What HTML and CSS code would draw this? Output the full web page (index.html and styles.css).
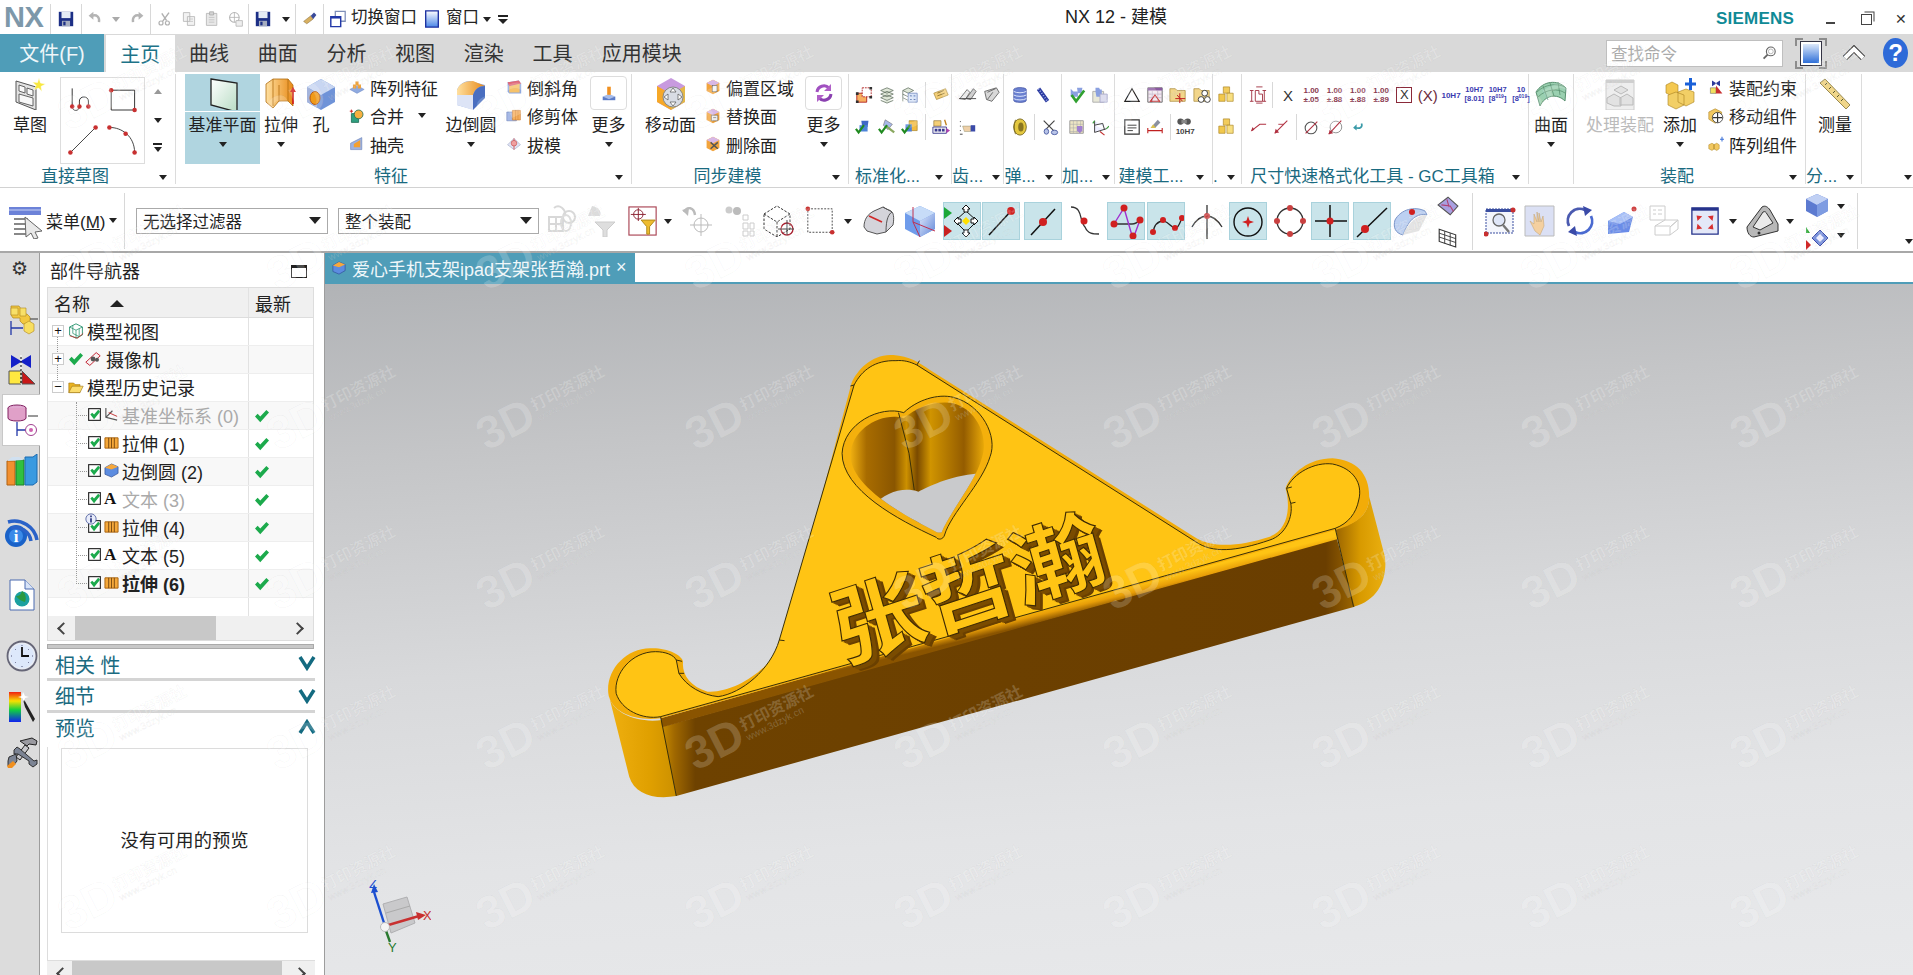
FILE: index.html
```html
<!DOCTYPE html>
<html lang="zh">
<head>
<meta charset="utf-8">
<title>NX 12 - 建模</title>
<link rel="stylesheet" href="styles.css">
</head>
<body>
<svg class="sprite" xmlns="http://www.w3.org/2000/svg">
<defs>
<linearGradient id="gBlue" x1="0" y1="0" x2="1" y2="1"><stop offset="0" stop-color="#dfe8fb"/><stop offset="1" stop-color="#5f86d8"/></linearGradient>
<linearGradient id="gOrange" x1="0" y1="0" x2="1" y2="0"><stop offset="0" stop-color="#ffe0a0"/><stop offset="1" stop-color="#e88a18"/></linearGradient>
<linearGradient id="gYellow" x1="0" y1="0" x2="1" y2="1"><stop offset="0" stop-color="#fff2a8"/><stop offset="1" stop-color="#d8a628"/></linearGradient>
<linearGradient id="gPlane" x1="0" y1="0" x2="1" y2="1"><stop offset="0" stop-color="#ffffff"/><stop offset="1" stop-color="#b8dcc4"/></linearGradient>
<linearGradient id="gRain" x1="0" y1="0" x2="0" y2="1"><stop offset="0" stop-color="#f02010"/><stop offset=".3" stop-color="#f8e000"/><stop offset=".6" stop-color="#10d040"/><stop offset="1" stop-color="#1020f0"/></linearGradient>
<symbol id="save" viewBox="0 0 20 20"><path d="M2 2h16v16H2z" fill="#1c2f86"/><rect x="5" y="2" width="10" height="7" fill="#e4ebf5"/><rect x="5.500" y="12" width="9" height="6" fill="#a5adc0"/><rect x="7" y="13" width="2.500" height="4" fill="#1c2f86"/></symbol>
<symbol id="undo" viewBox="0 0 20 20"><path d="M6 6c6-2 10 1 9 8" fill="none" stroke="#b4b4b4" stroke-width="3"/><path d="M8 1v10L2 6z" fill="#b4b4b4"/></symbol>
<symbol id="redo" viewBox="0 0 20 20"><path d="M14 6c-6-2-10 1-9 8" fill="none" stroke="#b4b4b4" stroke-width="3"/><path d="M12 1v10l6-5z" fill="#b4b4b4"/></symbol>
<symbol id="cut" viewBox="0 0 20 20"><path d="M15 2 7 13M12 12 6 3" stroke="#b0b0b0" stroke-width="1.800" fill="none"/><circle cx="5" cy="15" r="2.500" fill="none" stroke="#b0b0b0" stroke-width="1.500"/><circle cx="13" cy="15" r="2.500" fill="none" stroke="#b0b0b0" stroke-width="1.500"/></symbol>
<symbol id="copy" viewBox="0 0 20 20"><path d="M3 2h8v11H3zM8 7h9v11H8z" fill="#f2f2f2" stroke="#b4b4b4"/><path d="M10 10h5M10 13h5" stroke="#c4c4c4"/></symbol>
<symbol id="paste" viewBox="0 0 20 20"><path d="M3 3h13v15H3z" fill="#e8e8e8" stroke="#b4b4b4"/><path d="M7 1h5v4H7z" fill="#d4d4d4" stroke="#aaa"/><path d="M6 8h7M6 11h7M6 14h7" stroke="#c0c0c0"/></symbol>
<symbol id="glass" viewBox="0 0 20 20"><circle cx="8" cy="8" r="6" fill="none" stroke="#b4b4b4" stroke-width="1.300"/><path d="M2 8h12M8 2v12" stroke="#b4b4b4"/><path d="M10 12h8v7h-8z" fill="#eee" stroke="#b4b4b4"/></symbol>
<symbol id="brush" viewBox="0 0 20 20"><path d="M2 13 11 6l3 4-8 6z" fill="#d8b060" stroke="#7a6030" stroke-width=".6"/><path d="M11 6l4-4 3 3-4 5z" fill="#3a4a9a"/></symbol>
<symbol id="swin" viewBox="0 0 20 20"><path d="M7 1.500h11v11H7z" fill="#fff" stroke="#7f8fb8" stroke-width="1.400"/><path d="M2 7.500h11v11H2z" fill="#fff" stroke="#2238a8" stroke-width="1.600"/><path d="M2 7.500h11v2H2z" fill="#2238a8"/></symbol>
<symbol id="win" viewBox="0 0 20 20"><defs><linearGradient id="gW" x1="0" y1="0" x2="0" y2="1"><stop offset="0" stop-color="#fff"/><stop offset="1" stop-color="#4a86e8"/></linearGradient></defs><path d="M3 1h14v18H3z" fill="url(#gW)" stroke="#1a2fa0" stroke-width="1.500"/></symbol>
<symbol id="mag" viewBox="0 0 20 20"><circle cx="11" cy="8" r="5.500" fill="#fff" stroke="#666" stroke-width="1.400"/><circle cx="11" cy="8" r="3" fill="none" stroke="#aaa"/><path d="M7 12l-5 5" stroke="#666" stroke-width="2.400"/></symbol>
<symbol id="sketch" viewBox="0 0 32 32"><path d="M2 3 22 9v23L2 24z" fill="#e2e2e2" stroke="#555"/><path d="M5 7l6 2v6l-6-2zM13 10l6 2v6l-6-2zM5 16l14 4v8L5 24z" fill="#f8f8f8" stroke="#555" stroke-width=".9"/><path d="M25 0l1.500 5 5 1-4.500 2.500 1 5-3.500-3.500-4.500 2 2-4.500-3.500-3.500 5 .5z" fill="#f8e840" stroke="#fff" stroke-width=".5"/></symbol>
<symbol id="plane" viewBox="0 0 32 32"><path d="M4 1 30 5v29L4 27z" fill="url(#gPlane)" stroke="#222" stroke-width="1.300"/></symbol>
<symbol id="extrude" viewBox="0 0 32 32"><path d="M1 6 8 1h15l5 6v21l-5-5H14l-6 7-7-6z" fill="url(#gOrange)" stroke="#b06c10" stroke-width=".8"/><path d="M8 1v27M14 7v16M23 1v22" stroke="#b06c10" fill="none" stroke-width=".8"/><path d="M28 26V13" stroke="#d01818" stroke-width="1.600"/><path d="M25 14l3-5 3 5z" fill="#d01818"/></symbol>
<symbol id="hole" viewBox="0 0 32 32"><path d="M2 9 16 1l14 8v15l-14 8-14-8z" fill="#6f93d8"/><path d="M2 9 16 1l14 8-14 8z" fill="#c8d6f2"/><path d="M2 9l10 6v15L2 24z" fill="#a4b4dc"/><ellipse cx="10" cy="20" rx="5" ry="6.500" fill="#f09a18" stroke="#b85a10"/></symbol>
<symbol id="blend" viewBox="0 0 32 32"><path d="M2 12C4 6 10 3 15 3l15 4v10l-14 14-14-4z" fill="#8ea8e0"/><path d="M2 12C4 6 10 3 18 3l12 5c-6 0-10 3-12 9L2 17z" fill="url(#gOrange)"/><path d="M30 8v12L18 32V17c2-6 6-9 12-9z" fill="#4a6ec0"/><path d="M2 17h16v15L2 27z" fill="#dde4f6"/></symbol>
<symbol id="move" viewBox="0 0 32 32"><path d="M16 0 30 8v16l-14 8-14-8V8z" fill="#c89adf"/><path d="M2 8l14 8v16L2 24z" fill="#f6a828"/><path d="M16 16v16l14-8V8z" fill="#e4b848"/><circle cx="18" cy="19" r="10" fill="#d8dce4" stroke="#888"/><path d="M18 10l3 4h-6zM18 28l3-4h-6zM9 19l4-3v6zM27 19l-4-3v6z" fill="#fff" stroke="#555" stroke-width=".7"/></symbol>
<symbol id="morebox" viewBox="0 0 20 20"><path d="M3 14h14v4H3z" fill="#5c7cc8"/><path d="M3 14l7-3 7 3-7 3z" fill="#a8bce8"/><path d="M8 3h4v9H8z" fill="#f09020"/></symbol>
<symbol id="cycle" viewBox="0 0 20 20"><path d="M3 9a7 7 0 0 1 12-4" fill="none" stroke="#a050c0" stroke-width="3"/><path d="M17 11a7 7 0 0 1-12 4" fill="none" stroke="#8a40b0" stroke-width="3"/><path d="M17 1v7h-7zM3 19v-7h7z" fill="#b060c8"/></symbol>
<symbol id="pattern" viewBox="0 0 20 20"><path d="M1 13l9-5 9 5-9 5z" fill="#8faae0" stroke="#6a84c0" stroke-width=".5"/><path d="M5 7h4v5H5zM11 7h4v5h-4zM8 3h4v5H8z" fill="#f2a238"/></symbol>
<symbol id="unite" viewBox="0 0 20 20"><path d="M3 7h9v11H3z" fill="#30a080" stroke="#1c6a50"/><circle cx="12" cy="8" r="5.500" fill="#f7b040" stroke="#1c6a50"/><path d="M1 4h4M3 2v4" stroke="#d02020" stroke-width="1.200"/></symbol>
<symbol id="shell" viewBox="0 0 20 20"><path d="M2 9 16 2v15L2 17z" fill="#9db2e2" stroke="#6078b0" stroke-width=".7"/><path d="M6 10l8-5v9H6z" fill="#f4a030"/></symbol>
<symbol id="chamfer" viewBox="0 0 20 20"><path d="M2 4l14-2 3 4v12H4L2 16z" fill="#8ea8e0"/><path d="M2 4l14-2 3 4L4 9z" fill="#e06878"/><path d="M4 9l13-3v11H4z" fill="#f6c26a"/></symbol>
<symbol id="trim" viewBox="0 0 20 20"><path d="M1 5h12v11H1z" fill="#a7b9e6" stroke="#6a80b8" stroke-width=".7"/><path d="M8 3h10v12H8z" fill="#f7b060" stroke="#c87a30" stroke-width=".7"/><path d="M12 3v12M15 3v12" stroke="#c87a30" stroke-width=".6"/></symbol>
<symbol id="draft" viewBox="0 0 20 20"><path d="M2 11 10 3l8 8-8 6z" fill="#e0e4f4" stroke="#a0a8c8" stroke-width=".8"/><path d="M10 3v14" stroke="#d04040"/><circle cx="10" cy="9" r="3.500" fill="#f0a0a0" stroke="#c04040" stroke-width=".7"/></symbol>
<symbol id="offset" viewBox="0 0 20 20"><path d="M10 1 18 5v10l-8 4-8-4V5z" fill="#f2a43c"/><path d="M2 5l8 4 8-4-8-4z" fill="#d8b8e6"/><rect x="9" y="8" width="6" height="8" fill="#f4f4f4" stroke="#555" stroke-width=".7"/></symbol>
<symbol id="replace" viewBox="0 0 20 20"><path d="M10 1 18 5v10l-8 4-8-4V5z" fill="#f2a43c"/><path d="M2 5l8 4 8-4-8-4z" fill="#d8b8e6"/><path d="M8 9h8v7H8z" fill="#eee" stroke="#555" stroke-width=".7"/><path d="M10 12h4" stroke="#888"/></symbol>
<symbol id="delface" viewBox="0 0 20 20"><path d="M10 1 18 5v10l-8 4-8-4V5z" fill="#f2a43c"/><path d="M2 5l8 4 8-4-8-4z" fill="#d8b8e6"/><path d="M7 8l9 8M16 8l-9 8" stroke="#555" stroke-width="1.800"/></symbol>
<symbol id="m1" viewBox="0 0 20 20"><path d="M2 8h11v10H2z" fill="#f7b060" stroke="#b02020"/><path d="M8 2h10v10H8z" fill="#fff" stroke="#b02020" stroke-dasharray="2 1"/><path d="M1 7h3v3H1zM16 1h3v3h-3zM16 11h3v3h-3zM1 16h3v3H1z" fill="#303030"/></symbol>
<symbol id="m2" viewBox="0 0 20 20"><path d="M3 5l7-3 7 3-7 3zM3 9l7-3 7 3-7 3zM3 13l7-3 7 3-7 3zM3 16l7 3 7-3" fill="#dfe7d8" stroke="#5a6a5a" stroke-width=".8"/></symbol>
<symbol id="m3" viewBox="0 0 20 20"><path d="M2 5l6-3 6 3-6 3zM2 9l6 3M2 13l6 3M2 5v12" fill="#dfe7d8" stroke="#5a6a5a" stroke-width=".8"/><path d="M8 8h10v10H8z" fill="#d8e4f8" stroke="#6a80b8" stroke-width=".8"/><path d="M10 11h2M14 11h2M10 15h2M14 15h2" stroke="#5070b0"/></symbol>
<symbol id="m4" viewBox="0 0 20 20"><path d="M2 8 15 3l3 7-13 5z" fill="#f4cf78" stroke="#a88838" stroke-width=".8"/><path d="M6 8l7-3M6 11l8-3" stroke="#8a7030"/></symbol>
<symbol id="m5" viewBox="0 0 20 20"><path d="M7 3h8l-1 7H8z" fill="#4068c8"/><path d="M5 8h9v7H5z" fill="#4c84d8"/><path d="M1 12l3 4 6-8" fill="none" stroke="#208a20" stroke-width="2.400"/></symbol>
<symbol id="m6" viewBox="0 0 20 20"><path d="M8 2l8 5-5 6-5-5z" fill="#a8b8e8" stroke="#666" stroke-width=".6"/><path d="M9 9l9 7" stroke="#8aa860" stroke-width="2.500"/><path d="M1 12l3 4 6-8" fill="none" stroke="#208a20" stroke-width="2.400"/></symbol>
<symbol id="m7" viewBox="0 0 20 20"><path d="M9 3h9v11H9z" fill="#f2bb40" stroke="#a07a20" stroke-width=".7"/><path d="M5 7h7v8H5z" fill="#5080d8"/><path d="M1 12l3 4 6-8" fill="none" stroke="#208a20" stroke-width="2.400"/></symbol>
<symbol id="m8" viewBox="0 0 20 20"><path d="M2 3h8v6H2z" fill="#f4cf78" stroke="#8a7030" stroke-width=".7"/><path d="M1 10h15v7H1z" fill="#f4f4f4" stroke="#3a3a90"/><path d="M3 12h3v3H3zM7 12h3v3H7zM11 12h3v3h-3z" fill="#3a3a90"/><path d="M16 11l4 3-4 3z" fill="#b040b0"/><path d="M14 2l2 6" stroke="#c08020" stroke-width="1.500"/></symbol>
<symbol id="g1" viewBox="0 0 20 20"><path d="M1 14 9 4l3 3-5 8z" fill="#f0f0f0" stroke="#444" stroke-width=".8"/><path d="M8 14 16 3l3 3-6 9z" fill="#d0d0d0" stroke="#444" stroke-width=".8"/><path d="M0 14h19" stroke="#444"/></symbol>
<symbol id="g2" viewBox="0 0 20 20"><path d="M3 6 16 2l3 5-8 10-6-2z" fill="#d8d8d8" stroke="#444" stroke-width=".8"/><path d="M6 7l9-4M6 15l6-8" stroke="#444" stroke-width=".8"/></symbol>
<symbol id="g3" viewBox="0 0 20 20"><path d="M3 4c0-3 14-3 14 0v12c0 3-14 3-14 0z" fill="#6a80d0" stroke="#2a3a90" stroke-width=".6"/><path d="M3 6c3 2 11 2 14 0M3 10c3 2 11 2 14 0M3 14c3 2 11 2 14 0" stroke="#e8eeff" fill="none"/></symbol>
<symbol id="g4" viewBox="0 0 20 20"><path d="M5 3l10 14" stroke="#2a3aa0" stroke-width="4.500"/><path d="M5 3l10 14" stroke="#a0b0e8" stroke-width="2" stroke-dasharray="1 2"/></symbol>
<symbol id="g5" viewBox="0 0 20 20"><ellipse cx="10" cy="10" rx="7" ry="9" fill="#e4c840" stroke="#7a6a20"/><ellipse cx="11" cy="10" rx="3" ry="5" fill="#8a7620"/><path d="M5 2c-2 5-2 11 0 16" stroke="#7a6a20" fill="none"/></symbol>
<symbol id="g6" viewBox="0 0 20 20"><path d="M3 3l13 13M15 3 4 14" stroke="#444" stroke-width="1.300"/><ellipse cx="15" cy="16" rx="3.500" ry="2.500" fill="#b8c4e8" stroke="#4a5aa0"/><ellipse cx="6" cy="15" rx="2.500" ry="3" fill="#b8c4e8" stroke="#4a5aa0"/></symbol>
<symbol id="g7" viewBox="0 0 20 20"><path d="M1 4h1M1 9h1M1 14h1M1 18h3" stroke="#333"/><path d="M4 9h9v6H6z" fill="#eed0a8" stroke="#886" stroke-width=".5"/><path d="M13 8h5v7h-5z" fill="#3a4aa8"/></symbol>
<symbol id="j1" viewBox="0 0 20 20"><path d="M3 3l3 3h5v6H3z" fill="#8aa0e0"/><path d="M10 2h6l-1 6h-4z" fill="#8aa0e0"/><path d="M4 10l5 7 9-12" fill="none" stroke="#30a030" stroke-width="3"/></symbol>
<symbol id="j2" viewBox="0 0 20 20"><path d="M2 6h12v12H2z" fill="#e8e8d8" stroke="#aaa"/><path d="M5 6V2h4l1 2h2v8H6z" fill="#8aa0e0"/><path d="M10 9h8v9h-8z" fill="#dde" stroke="#aac"/></symbol>
<symbol id="j3" viewBox="0 0 20 20"><path d="M2 3h15v14H2z" fill="#eee6c4" stroke="#999"/><path d="M2 7h15M2 11h15M2 15h15M6 3v14M10 3v14M14 3v14" stroke="#aaa" stroke-width=".6"/><path d="M10 9h6v5l-3 3-3-3z" fill="#a080d0"/></symbol>
<symbol id="j4" viewBox="0 0 20 20"><path d="M4 3v13l13-4M4 8l9-2 2 7" fill="#eef" stroke="#333"/><path d="M4 3 2 6M17 12l3-3" stroke="#3a9a3a" stroke-width="1.300"/><path d="M10 15l5 4" stroke="#c03030" stroke-width="1.300"/></symbol>
<symbol id="tri" viewBox="0 0 20 20"><path d="M10 3 18 17H2z" fill="#fff" stroke="#222" stroke-width="1.300"/></symbol>
<symbol id="tbl" viewBox="0 0 20 20"><path d="M2 2h16v16H2z" fill="#f2e8f0" stroke="#666"/><path d="M2 2h16v3H2z" fill="#8a5aa0"/><path d="M2 9h16M2 13h16M7 5v13M13 5v13" stroke="#b8a8c0" stroke-width=".7"/><path d="M10 10l5 7H5z" fill="none" stroke="#c02020" stroke-width="1.200"/></symbol>
<symbol id="ffold" viewBox="0 0 20 20"><path d="M1 3h6l2 2h9v12H1z" fill="#f2d68a" stroke="#a88838" stroke-width=".8"/><path d="M12 8v11M7 14h11M9 10l6 7" stroke="#c02020" stroke-width="1.100"/></symbol>
<symbol id="gfold" viewBox="0 0 20 20"><path d="M1 3h6l2 2h9v12H1z" fill="#f2d68a" stroke="#a88838" stroke-width=".8"/><circle cx="13" cy="8" r="3.200" fill="#fff" stroke="#333"/><circle cx="9" cy="15" r="3.200" fill="#fff" stroke="#333"/><circle cx="16" cy="15" r="3.200" fill="#fff" stroke="#333"/></symbol>
<symbol id="note" viewBox="0 0 20 20"><path d="M2 2h16v16H2z" fill="#fff" stroke="#333" stroke-width="1.300"/><path d="M5 8h10M5 11h10M5 14h6" stroke="#333"/></symbol>
<symbol id="bru2" viewBox="0 0 20 20"><path d="M2 14h16M2 11v6M18 11v6" stroke="#c02020" stroke-width="1.200"/><path d="M7 9l6-7 3 3-6 6z" fill="#8a90a0"/><path d="M5 11l3-4 3 4z" fill="#d8c050"/></symbol>
<symbol id="bino" viewBox="0 0 20 20"><circle cx="5" cy="4" r="3.500" fill="#555"/><circle cx="13" cy="4" r="3.500" fill="#555"/><rect x="6" y="2" width="6" height="4" fill="#888"/></symbol>
<symbol id="gold" viewBox="0 0 20 20"><path d="M7 1h7v7H7z" fill="#f2cc5c" stroke="#a88020" stroke-width=".7"/><path d="M2 9h7v8H2z" fill="#f2c84c" stroke="#a88020" stroke-width=".7"/><path d="M11 8h7v9h-7z" fill="#f8df80" stroke="#a88020" stroke-width=".7"/></symbol>
<symbol id="d1" viewBox="0 0 20 20"><path d="M7 5v12h8V9h-4V5zM3 5v12M17 5v12M1 5h4M1 17h4M15 5h4M15 17h4M8 1h7M8 19h7" fill="none" stroke="#a03040" stroke-width="1"/></symbol>
<symbol id="d2" viewBox="0 0 20 20"><path d="M3 14 12 7h7" fill="none" stroke="#b03040" stroke-width="1.200"/><path d="M2 15l2-5 2 3z" fill="#b03040"/></symbol>
<symbol id="d3" viewBox="0 0 20 20"><path d="M3 17 17 3" stroke="#b03040" stroke-width="1.200"/><path d="M3 17l1-5 4 4z" fill="#b03040"/><path d="M7 7h6" stroke="#b03040"/></symbol>
<symbol id="d4" viewBox="0 0 20 20"><circle cx="10" cy="11" r="6.500" fill="none" stroke="#555" stroke-width="1.200"/><path d="M4 17 17 4" stroke="#b03040" stroke-width="1.200"/></symbol>
<symbol id="d5" viewBox="0 0 20 20"><circle cx="11" cy="10" r="6.500" fill="none" stroke="#888"/><path d="M3 18 17 3" stroke="#b03040" stroke-width="1.200"/><path d="M3 18l1-5 4 4z" fill="#b03040"/></symbol>
<symbol id="d6" viewBox="0 0 20 20"><path d="M15 5c2 5-2 8-9 6" fill="none" stroke="#3a9aa8" stroke-width="2.400"/><path d="M8 6v9l-5-4z" fill="#3a9aa8"/></symbol>
<symbol id="surf" viewBox="0 0 32 32"><path d="M1 14C8 3 22 1 31 10l-1 13C22 15 10 17 5 28z" fill="#9ad0b0" stroke="#5a9070"/><path d="M8 8l5 14M15 5l4 13M23 4l2 13M3 19c8-8 20-9 27-4M2 14c8-8 20-9 28-5" stroke="#5a9070" fill="none" stroke-width=".8"/></symbol>
<symbol id="asmh" viewBox="0 0 32 32"><path d="M2 2h28v30H2z" fill="#eee" stroke="#ccc"/><path d="M2 2h28v3H2z" fill="#cfcfcf"/><path d="M10 12l7-4 7 4-7 4z M3 20l7-4 7 4v8l-7 0-7-3zM16 20l7-4 6 4v7h-13z" fill="#e2e2e2" stroke="#bbb"/></symbol>
<symbol id="add" viewBox="0 0 32 32"><path d="M2 7l6-3 6 3v8l-6 3-6-3z" fill="#f4c850" stroke="#a88020" stroke-width=".6"/><path d="M4 17l8-3 8 3v10l-8 4-8-4zM14 14l8-3 8 3v10l-8 4-8-4z" fill="#f2cf66" stroke="#a88020" stroke-width=".6"/><path d="M21 6h11M26.500 0v12" stroke="#1a60d8" stroke-width="3"/></symbol>
<symbol id="acons" viewBox="0 0 20 20"><path d="M3 11h7v7H3z" fill="#f2e060" stroke="#555" stroke-width=".6"/><path d="M10 18V8l8 10z" fill="#c83030"/><path d="M5 2l5 3 5-3v7l-5-3-5 3z" fill="#2a3a9a"/><path d="M10 1v8" stroke="#fff" stroke-dasharray="1 1"/></symbol>
<symbol id="amove" viewBox="0 0 20 20"><path d="M9 1 17 5v9l-8 5-8-5V5z" fill="#f2c860" stroke="#a88020" stroke-width=".7"/><circle cx="12" cy="12" r="6.500" fill="#fff" stroke="#333"/><path d="M12 6v12M6 12h12" stroke="#333" stroke-width="1.400"/></symbol>
<symbol id="apat" viewBox="0 0 20 20"><path d="M1 11l4-2 3 2v5l-3 2-4-2zM7 11l4-2 3 2v5l-3 2-4-2z" fill="#f2c860" stroke="#a88020" stroke-width=".6"/><path d="M15 4h5M17.500 1v6" stroke="#3a70d8" stroke-width="1.300"/></symbol>
<symbol id="rule" viewBox="0 0 32 32"><path d="M1 5 6 1l25 26-4 4z" fill="#f0d68a" stroke="#9a8a50"/><path d="M6 7l2-2M10 11l2-2M14 15l2-2M18 19l2-2M22 23l2-2" stroke="#5a5a30"/></symbol>
<symbol id="menu" viewBox="0 0 36 36"><path d="M0 4h32v8H0z" fill="#6c82d8"/><path d="M0 7h32" stroke="#c8d2f4"/><path d="M5 16h14M5 21h14M5 26h14M5 31h14" stroke="#888" stroke-width="2"/><path d="M16 14 33 28l-7 1 3 6-4 1-3-6-5 4z" fill="#e8e8e8" stroke="#666"/></symbol>
<symbol id="t1" viewBox="0 0 32 32"><path d="M2 12h14v14H2zM7 3a7 8 0 0 1 11 8" fill="none" stroke="#d8d8d8" stroke-width="2"/><circle cx="22" cy="12" r="6" fill="none" stroke="#d8d8d8" stroke-width="2"/><ellipse cx="19" cy="18" rx="5" ry="8" fill="none" stroke="#ddd" stroke-width="2"/><path d="M2 19h14M9 12v14" stroke="#d8d8d8" stroke-width="2"/></symbol>
<symbol id="t2" viewBox="0 0 32 32"><path d="M8 1c6 1 10 5 8 10H4z" fill="#dcdcdc"/><path d="M11 17h20l-8 8v7h-4v-7z" fill="#dedede" stroke="#ccc"/></symbol>
<symbol id="t3" viewBox="0 0 32 32"><rect x="1" y="1" width="29" height="30" fill="#fff" stroke="#a84050" stroke-width="1.200"/><circle cx="11" cy="9" r="5" fill="none" stroke="#8a2030"/><path d="M3 9h16M11 2v14" stroke="#8a2030"/><path d="M14 15h15l-6 7v8h-3v-8z" fill="#eebc30" stroke="#b08818"/></symbol>
<symbol id="t4" viewBox="0 0 32 32"><path d="M2 7c3-6 10-5 11 3" fill="none" stroke="#bbb" stroke-width="2.400"/><path d="M0 5l7-2-1 8z" fill="#bbb"/><circle cx="19" cy="20" r="7" fill="none" stroke="#bbb"/><path d="M8 20h22M19 9v22" stroke="#bbb"/></symbol>
<symbol id="t5" viewBox="0 0 32 32"><circle cx="6" cy="5" r="3.500" fill="#ccc"/><circle cx="14" cy="6" r="4" fill="#bbb"/><path d="M20 10h5v5h-5zM20 18h5v6h-5zM27 18h4v6h-4zM20 26h5v5h-5zM27 26h4v5h-4z" fill="#fff" stroke="#ccc"/></symbol>
<symbol id="t6" viewBox="0 0 32 32"><path d="M1 9 14 1l13 8v15L14 32 1 24zM1 9l13 8 13-8M14 17v15" fill="none" stroke="#333" stroke-dasharray="2.500 1.500"/><circle cx="24" cy="24" r="6" fill="none" stroke="#a82030" stroke-width="1.300"/><path d="M15 24h16M24 15v15" stroke="#444"/></symbol>
<symbol id="t7" viewBox="0 0 32 32"><path d="M3 3h26v25H3z" fill="none" stroke="#444" stroke-dasharray="2 1.500"/><circle cx="3" cy="3" r="2.500" fill="#c83030"/><circle cx="29" cy="28" r="2.500" fill="#c83030"/></symbol>
<symbol id="t8" viewBox="0 0 32 32"><path d="M1 22C1 14 5 9 11 6l9-4 9 5c2 2 2 8 1 13l-7 7-9 2-10-3z" fill="#d4d4da" stroke="#555"/><path d="M6 11l13 6" stroke="#d02828" stroke-width="1.700"/><path d="M20 2c4 3 8 3 9 5-3 2-6 6-6 20" fill="none" stroke="#555"/></symbol>
<symbol id="t9" viewBox="0 0 32 32"><path d="M1 8 16 1l15 7v16l-15 8-15-8z" fill="#6f9ceb"/><path d="M1 8 16 1l15 7-15 8z" fill="#c7dcf8"/><path d="M16 16v16l15-8V8z" fill="url(#gBlue)"/><path d="M9 2v15l22 9M9 17l7 15" stroke="#c03050" fill="none"/></symbol>
<symbol id="h1" viewBox="0 0 36 36"><path d="M0 4l8 6-8 6z" fill="#1ca838"/><path d="M0 22l8 6-8 6z" fill="#c82020"/><path d="M11 18 22 8l11 10-11 11z" fill="none" stroke="#111" stroke-width="1"/><path d="M22 2l4 4h-2v3h-4V6h-2zM22 34l4-4h-2v-3h-4v3h-2zM10 18l4-4v2h3v4h-3v2zM34 18l-4-4v2h-3v4h3v2z" fill="#fff" stroke="#111"/><path d="M22 14l4 4-4 4-4-4z" fill="#ffe000"/></symbol>
<symbol id="p-end" viewBox="0 0 36 36"><path d="M6 32 28 8" stroke="#111" stroke-width="1.500"/><circle cx="28" cy="8" r="4" fill="#d02020"/></symbol>
<symbol id="p-mid" viewBox="0 0 36 36"><path d="M6 32 30 6" stroke="#111" stroke-width="1.500"/><circle cx="18" cy="19" r="4" fill="#d02020"/></symbol>
<symbol id="p-curve" viewBox="0 0 36 36"><path d="M4 4c12 0 8 14 14 20 3 7 8 7 14 7" fill="none" stroke="#333" stroke-width="1.300"/><circle cx="17" cy="18" r="3.500" fill="#d02020"/></symbol>
<symbol id="p-poly" viewBox="0 0 36 36"><path d="M6 21h18c4 0 6-2 8-4" fill="none" stroke="#333" stroke-width="1.300"/><path d="M6 21 16 5l9 31 7-19" fill="none" stroke="#a030d0" stroke-width="1.400"/><circle cx="6" cy="21" r="3.500" fill="#d02020"/><circle cx="16" cy="5" r="3.500" fill="#d02020"/><circle cx="25" cy="33" r="3.500" fill="#d02020"/><circle cx="32" cy="17" r="3.500" fill="#d02020"/></symbol>
<symbol id="p-spl" viewBox="0 0 36 36"><path d="M5 30c1-9 5-12 11-12 6 2 8 8 12 7 3-1 4-6 6-10" fill="none" stroke="#222" stroke-width="1.300"/><circle cx="5" cy="29" r="3" fill="#d02020"/><circle cx="15" cy="17" r="3" fill="#d02020"/><circle cx="27" cy="25" r="3" fill="#d02020"/><circle cx="34" cy="15" r="3" fill="#d02020"/></symbol>
<symbol id="p-cross" viewBox="0 0 36 36"><path d="M18 2v34" stroke="#333" stroke-width="1.300"/><path d="M3 24c5-9 10-11 15-11s10 3 15 11" fill="none" stroke="#333" stroke-width="1.300"/><circle cx="18" cy="13" r="3" fill="#c84040"/></symbol>
<symbol id="p-cen" viewBox="0 0 36 36"><circle cx="18" cy="19" r="14" fill="none" stroke="#111" stroke-width="1.400"/><path d="M18 13l1.500 4.500 4.500 1.500-4.500 1.500L18 25l-1.500-4.500L12 19l4.500-1.500z" fill="#d02020"/></symbol>
<symbol id="p-quad" viewBox="0 0 36 36"><circle cx="18" cy="18" r="13" fill="none" stroke="#333" stroke-width="1.300"/><circle cx="18" cy="5" r="3" fill="#c84040"/><circle cx="18" cy="31" r="3" fill="#c84040"/><circle cx="5" cy="18" r="3" fill="#c84040"/><circle cx="31" cy="18" r="3" fill="#c84040"/></symbol>
<symbol id="p-x" viewBox="0 0 36 36"><path d="M18 2v32M3 18h32" stroke="#111" stroke-width="1.500"/><circle cx="18" cy="18" r="3.500" fill="#d02020"/></symbol>
<symbol id="p-near" viewBox="0 0 36 36"><path d="M3 34 33 5" stroke="#111" stroke-width="1.500"/><circle cx="11" cy="26" r="4" fill="#d02020"/></symbol>
<symbol id="p-surf" viewBox="0 0 36 36"><path d="M2 17C8 6 22 3 32 8l2 4c-9-2-18 3-24 20C2 30 0 24 2 17z" fill="#bcd0f2" stroke="#7a94c8"/><path d="M10 32c5-12 14-20 24-20l-8 16z" fill="#e4e4e4"/><circle cx="19" cy="9" r="3" fill="#d02020"/></symbol>
<symbol id="p-wire" viewBox="0 0 20 20"><path d="M1 9 10 2l9 8-7 8z" fill="#a8a0e0" stroke="#555"/><path d="M4 9l8 1 3 5M9 4l2 7" stroke="#b04070" fill="none"/></symbol>
<symbol id="p-grid" viewBox="0 0 20 20"><path d="M2 3l15 5v11L2 14z" fill="#fff" stroke="#333"/><path d="M7 4.800v11M12 6.500v11M2 6.500l15 5M2 10l15 5" stroke="#333" stroke-width=".8"/></symbol>
<symbol id="v1" viewBox="0 0 32 32"><path d="M2 4h27v24H2z" fill="#f4f6fc" stroke="#3a4ea0" stroke-dasharray="2 1"/><path d="M2 4h27v3H2z" fill="#3a4ea0"/><circle cx="15" cy="15" r="6" fill="#dfe6f8" stroke="#666" stroke-width="1.300"/><path d="M19 20l6 7" stroke="#777" stroke-width="2.400"/><circle cx="29" cy="5" r="2.500" fill="#c83030"/><circle cx="2" cy="29" r="2.500" fill="#c83030"/></symbol>
<symbol id="v2" viewBox="0 0 32 32"><path d="M1 1h29v30H1z" fill="#dbe0f4" stroke="#bbb"/><path d="M11 26 6 16l4 3V9l3 8V7l2 10V8l2 9 2-6 1 10-4 9z" fill="#f4d0a0" stroke="#c8a878" stroke-width=".6"/></symbol>
<symbol id="v3" viewBox="0 0 32 32"><path d="M5 21A12 12 0 0 1 21 5" fill="none" stroke="#4a5ab0" stroke-width="2.800"/><path d="M27 11a12 12 0 0 1-16 16" fill="none" stroke="#4a6ad0" stroke-width="2.800"/><path d="M19 1l9 4-7 6zM13 31l-9-4 7-6z" fill="#3a4aa8"/></symbol>
<symbol id="v4" viewBox="0 0 32 32"><path d="M2 16 18 7l9 5-4 15-21 2z" fill="#6a8ce8"/><path d="M2 16 18 7l9 5-13 7z" fill="#a8c0f8"/><circle cx="28" cy="4" r="2.500" fill="#d04040"/></symbol>
<symbol id="v5" viewBox="0 0 32 32"><path d="M3 1h15v14H3z" fill="#fff" stroke="#ccc"/><path d="M6 5h3M6 9h3M11 5h4M11 9h4" stroke="#ccc"/><path d="M8 21l10-6h13l-8 7v8H8zM8 21h15M23 22l8-7v9l-8 6" fill="#fff" stroke="#ccc"/></symbol>
<symbol id="v6" viewBox="0 0 32 32"><path d="M2 2h28v28H2z" fill="#e4e8f8" stroke="#26338c" stroke-width="1.400"/><path d="M2 2h28v3H2z" fill="#26338c"/><path d="M7 10l6 1-5 5zM25 10l-6 1 5 5zM7 25l6-1-5-5zM25 25l-6-1 5-5z" fill="#d83030"/></symbol>
<symbol id="v7" viewBox="0 0 36 36"><path d="M2 24 17 4c3-2 6 0 8 3l8 14v7L9 34C5 34 2 30 2 24z" fill="#b8b8b8" stroke="#333"/><path d="M8 24 18 9c2-1 3 0 4 2l6 9-13 7z" fill="#eaeaea" stroke="#333"/><circle cx="14" cy="30" r="1.500" fill="#333"/></symbol>
<symbol id="v8" viewBox="0 0 24 24"><path d="M1 6 12 1l11 5v12l-11 6-11-6z" fill="#5c7ad0"/><path d="M1 6 12 1l11 5-11 6z" fill="#c0d0f4"/><path d="M12 12v12l11-6V6z" fill="#7e9ce2"/></symbol>
<symbol id="v9" viewBox="0 0 24 24"><path d="M1 1l4 6H1z" fill="#28a838"/><path d="M1 14l5 5-5 5z" fill="#d02828"/><path d="M7 12l8-8 8 8-8 8z" fill="#7a92dc" stroke="#3a4aa8"/><path d="M11 12l4-4 4 4-4 4z" fill="#eef"/></symbol>
<symbol id="n1" viewBox="0 0 32 32"><path d="M5 2h8l2 3v5h6l3 3v7h-7l-3-3v-3H7l-2-3z" fill="#f2c840" stroke="#b08820" stroke-width=".7"/><path d="M14 4h6v8h-6zM5 4h7v7H5z" fill="#f8e068" stroke="#b08820" stroke-width=".6"/><path d="M5 17v14M5 24h12" stroke="#2238a8" stroke-width="1.300"/><path d="M24 15h9" stroke="#333"/><path d="M18 20l5-3 5 3v7l-5 3-5-3z" fill="#f8de60" stroke="#b08820" stroke-width=".6"/></symbol>
<symbol id="n2" viewBox="0 0 32 32"><path d="M5 1l10 6 10-6v13l-10-6-10 6z" fill="#1420c8"/><path d="M3 17h12v13H3z" fill="#ffe840" stroke="#555"/><path d="M16 17v13h13z" fill="#c81818" stroke="#555"/><path d="M15 1v29" stroke="#fff" stroke-dasharray="2 2"/><path d="M15 1v29" stroke="#111" stroke-dasharray="2 2" stroke-dashoffset="2"/></symbol>
<symbol id="n3" viewBox="0 0 32 32"><ellipse cx="11" cy="4" rx="9" ry="3" fill="#e0a8d0" stroke="#802060"/><path d="M2 4v10c0 4 18 4 18 0V4" fill="#e0a0c8" stroke="#802060"/><path d="M11 18v14M11 26h8" stroke="#2238a8" stroke-width="1.300"/><path d="M22 12h10" stroke="#333"/><circle cx="25" cy="26" r="5.500" fill="none" stroke="#a04090"/><circle cx="25" cy="26" r="2" fill="#d060b0"/></symbol>
<symbol id="n4" viewBox="0 0 32 32"><path d="M1 7h8v24H1z" fill="#f29030" stroke="#b06010"/><path d="M10 6h8v25h-8z" fill="#30c040" stroke="#1c8028"/><path d="M19 3h8l4-3v28l-4 3h-8z" fill="#3a9ae0" stroke="#1a6ab0"/><path d="M1 7l5-4h7l5 3" fill="#d0e0f0"/></symbol>
<symbol id="n5" viewBox="0 0 36 36"><circle cx="12" cy="24" r="11" fill="#1a62c8"/><circle cx="12" cy="24" r="7" fill="#3a8ae8"/><text x="12" y="30" font-size="17" font-weight="700" fill="#fff" text-anchor="middle" font-family="Liberation Serif">i</text><path d="M4 10A23 23 0 0 1 33 28M7 16A16 16 0 0 1 27 29" fill="none" stroke="#2a62c8" stroke-width="3.500"/></symbol>
<symbol id="n6" viewBox="0 0 32 32"><path d="M4 1h15l9 9v21H4z" fill="#fff" stroke="#4a6ab0"/><path d="M19 1v9h9" fill="#d8e4f8" stroke="#4a6ab0"/><circle cx="16" cy="20" r="7.500" fill="#1ca0a0"/><path d="M10 17c4 0 5-2 6-5 3 2 5 6 3 11-3-1-6-2-9-6z" fill="#2a9a40"/></symbol>
<symbol id="n7" viewBox="0 0 32 32"><circle cx="16" cy="16" r="14.500" fill="#e8ecf4" stroke="#667" stroke-width="1.800"/><circle cx="16" cy="16" r="12" fill="#dde8fb"/><path d="M16 7v9h7" fill="none" stroke="#111" stroke-width="1.800"/><path d="M16 5v1M16 26v1M5 16h1M26 16h1M9 9l.7.7M22.300 22.300l.7.7M23 9l-.7.7M9 23l.7-.7" stroke="#557"/></symbol>
<symbol id="n8" viewBox="0 0 32 32"><rect x="3" y="1" width="12" height="30" fill="url(#gRain)"/><path d="M16 5l4 7 9 16-2 3-8-15z" fill="#222"/><path d="M17 1l2 4 4 1-4 1-1 4-2-4-4-1 4-1z" fill="#fff"/></symbol>
<symbol id="n9" viewBox="0 0 32 32"><path d="M14 4l12-3 5 3-1 4-7-1-2 2z" fill="#9a9aa0" stroke="#222"/><path d="M19 8l4 3-9 12-4-3z" fill="#c8c8cc" stroke="#222"/><path d="M8 13l3-3 3 2 14 12 3-1v4l-4 3-4-3v-3L12 17H8z" fill="#7c8494" stroke="#222" stroke-width=".9"/><path d="M3 20l7-3 1 7-4 5-5 0 0-5z" fill="#7c8494" stroke="#222" stroke-width=".9"/><path d="M1 29l6-5 3 3-4 4H2z" fill="#f09020"/></symbol>
<symbol id="cube3d" viewBox="0 0 20 20"><path d="M10 1 18 5v10l-8 4-8-4V5z" fill="none" stroke="#22906a" stroke-width="1.100"/><path d="M2 5l8 4 8-4M10 9v10M6 3v10l8 4V7" fill="none" stroke="#22906a" stroke-width=".9"/><path d="M2 16l10 3 7-6" stroke="#c83030" fill="none"/></symbol>
<symbol id="cam" viewBox="0 0 20 20"><path d="M1 14 14 2l5 4-13 12z" fill="#f8f0f0" stroke="#c02030" stroke-width="1.200"/><circle cx="10" cy="10" r="3" fill="#555"/><circle cx="15" cy="11" r="2.500" fill="#555"/></symbol>
<symbol id="folder" viewBox="0 0 20 20"><path d="M1 5h6l2 2h6v10H1z" fill="#eab320" stroke="#9a7010" stroke-width=".7"/><path d="M1 17 5 9h14l-4 8z" fill="#fbdc6c" stroke="#9a7010" stroke-width=".7"/></symbol>
<symbol id="check" viewBox="0 0 16 16"><path d="M0 8.500 3 5.500 6 8.500 13 1l3 3-10 11z" fill="#1caa4c"/></symbol>
<symbol id="cbox" viewBox="0 0 14 14"><rect x=".7" y=".7" width="12.600" height="12.600" fill="#fff" stroke="#222" stroke-width="1.200"/><path d="M2.500 7l2-2 2 2 4.500-5 2 2-6.500 8z" fill="#1caa4c"/></symbol>
<symbol id="csys" viewBox="0 0 16 16"><path d="M2 1v10l12 3M2 11l7-7" fill="none" stroke="#555" stroke-width="1.200"/><path d="M5 6l9 4" stroke="#c03030"/></symbol>
<symbol id="ext" viewBox="0 0 16 16"><path d="M1 3h14v11H1z" fill="#f5a83a" stroke="#a8620e"/><path d="M5 3v11M8 3v11M11 3v11" stroke="#7a4a10"/></symbol>
<symbol id="edge" viewBox="0 0 16 16"><path d="M1 5 8 1l7 3v7l-7 4-7-3z" fill="#5c8ce0" stroke="#2a4a90" stroke-width=".7"/><path d="M1 5 8 1l7 3-7 3z" fill="#f6a83c"/></symbol>
<symbol id="info" viewBox="0 0 14 14"><circle cx="7" cy="7" r="6" fill="#e8ecfa" stroke="#5060a0"/><path d="M6 6h2v5H6zM6 3h2v2H6z" fill="#303a80"/></symbol>
</defs>
</svg>

<header class="titlebar">
  <span class="nx">NX</span><i class="vsep"></i>
  <span class="c"><svg class="i18"><use href="#save"/></svg></span><i class="vsep"></i>
  <span class="c"><svg class="i16"><use href="#undo"/></svg></span><span class="c"><i class="arr gray"></i></span><span class="c"><svg class="i16"><use href="#redo"/></svg></span><i class="vsep"></i>
  <span class="c"><svg class="i16"><use href="#cut"/></svg></span><span class="c"><svg class="i16"><use href="#copy"/></svg></span><span class="c"><svg class="i16"><use href="#paste"/></svg></span><span class="c"><svg class="i16"><use href="#glass"/></svg></span><i class="vsep"></i>
  <span class="c"><svg class="i18"><use href="#save"/></svg></span><span class="c"><i class="arr"></i></span><i class="vsep"></i>
  <span class="c"><svg class="i16"><use href="#brush"/></svg></span><i class="vsep"></i>
  <span class="c"><svg class="i18"><use href="#swin"/></svg></span><span class="qt">切换窗口</span>
  <span class="c"><svg class="i18"><use href="#win"/></svg></span><span class="qt">窗口</span>
  <span class="c"><i class="arr"></i></span><span class="c"><i class="menu-arr"></i></span>
  <span></span>
  <span class="apptitle">NX 12 - 建模</span>
  <span></span>
  <span class="siemens">SIEMENS</span>
  <span class="winctl"><i class="wmin"></i></span>
  <span class="winctl"><i class="wres"></i></span>
  <span class="winctl wclose">✕</span>
</header>

<nav class="tabs">
  <span class="filetab">文件(F)</span>
  <span class="tab active">主页</span><span class="tab">曲线</span><span class="tab">曲面</span><span class="tab">分析</span><span class="tab">视图</span><span class="tab">渲染</span><span class="tab">工具</span><span class="tab wide">应用模块</span>
  <span class="tabs-right">
    <span class="search"><span>查找命令</span><svg class="i16"><use href="#mag"/></svg></span>
    <span class="fullscr"><i></i></span>
    <svg class="chev-up" viewBox="0 0 24 16"><path d="M3 13 12 4l9 9" fill="none" stroke="#333" stroke-width="6"/><path d="M3 13 12 4l9 9" fill="none" stroke="#fff" stroke-width="4"/></svg>
    <span class="help">?</span>
  </span>
</nav>

<section class="ribbon">
  <div class="group g1">
    <div class="gb">
      <div class="big w60"><svg class="i32"><use href="#sketch"/></svg><span>草图</span></div>
      <div class="gallery">
        <svg viewBox="0 0 40 40" class="gi"><path d="M8 6v20c0 6 8 6 8 0v-6c0-6 10-6 10 0v6" fill="none" stroke="#222"/><circle cx="8" cy="26" r="2.500" fill="#c83030"/><circle cx="16" cy="26" r="2.500" fill="#c83030"/><circle cx="26" cy="26" r="2.500" fill="#c83030"/></svg>
        <svg viewBox="0 0 40 40" class="gi"><path d="M8 8h26v22H8z" fill="none" stroke="#222"/><circle cx="8" cy="8" r="2.500" fill="#c83030"/><circle cx="34" cy="30" r="2.500" fill="#c83030"/></svg>
        <svg viewBox="0 0 40 40" class="gi"><path d="M6 34 34 6" stroke="#333"/><circle cx="6" cy="34" r="2.500" fill="#c83030"/><circle cx="34" cy="6" r="2.500" fill="#c83030"/></svg>
        <svg viewBox="0 0 40 40" class="gi"><path d="M6 6c14 0 28 10 28 28" fill="none" stroke="#333"/><circle cx="6" cy="6" r="2.500" fill="#c83030"/><circle cx="24" cy="13" r="2.500" fill="#c83030"/><circle cx="34" cy="34" r="2.500" fill="#c83030"/></svg>
      </div>
      <div class="scrollcol"><i class="arr up"></i><i class="arr"></i><i class="arr arrm"></i></div>
    </div>
    <div class="gl"><span>直接草图</span><b class="aw"><i class="arr"></i></b></div>
  </div>

  <div class="group g2">
    <div class="gb">
      <div class="big selected"><svg class="i32"><use href="#plane"/></svg><span>基准平面</span><i class="arr"></i></div>
      <div class="big w42"><svg class="i32"><use href="#extrude"/></svg><span>拉伸</span><i class="arr"></i></div>
      <div class="big w38"><svg class="i32"><use href="#hole"/></svg><span>孔</span></div>
      <div class="rows w90"><div class="ri"><svg class="i16"><use href="#pattern"/></svg>阵列特征</div><div class="ri"><svg class="i16"><use href="#unite"/></svg>合并<i class="arr ml"></i></div><div class="ri"><svg class="i16"><use href="#shell"/></svg>抽壳</div></div>
      <div class="big w64"><svg class="i32"><use href="#blend"/></svg><span>边倒圆</span><i class="arr"></i></div>
      <div class="rows w83"><div class="ri"><svg class="i16"><use href="#chamfer"/></svg>倒斜角</div><div class="ri"><svg class="i16"><use href="#trim"/></svg>修剪体</div><div class="ri"><svg class="i16"><use href="#draft"/></svg>拔模</div></div>
      <div class="more"><span class="morebox"><svg class="i18"><use href="#morebox"/></svg></span><span>更多</span><i class="arr"></i></div>
    </div>
    <div class="gl"><span>特征</span><b class="aw"><i class="arr"></i></b></div>
  </div>

  <div class="group g3">
    <div class="gb">
      <div class="big w52"><svg class="i32"><use href="#move"/></svg><span>移动面</span></div>
      <div class="rows w100"><div class="ri"><svg class="i16"><use href="#offset"/></svg>偏置区域</div><div class="ri"><svg class="i16"><use href="#replace"/></svg>替换面</div><div class="ri"><svg class="i16"><use href="#delface"/></svg>删除面</div></div>
      <div class="more"><span class="morebox"><svg class="i20"><use href="#cycle"/></svg></span><span>更多</span><i class="arr"></i></div>
    </div>
    <div class="gl"><span>同步建模</span><b class="aw"><i class="arr"></i></b></div>
  </div>

  <div class="group g4">
    <div class="gb minis">
      <div class="mr"><span class="mi"><svg class="i18"><use href="#m1"/></svg></span><span class="mi"><svg class="i18"><use href="#m2"/></svg></span><span class="mi"><svg class="i18"><use href="#m3"/></svg></span><i class="ms"></i><span class="mi"><svg class="i18"><use href="#m4"/></svg></span></div>
      <div class="mr"><span class="mi"><svg class="i18"><use href="#m5"/></svg></span><span class="mi"><svg class="i18"><use href="#m6"/></svg></span><span class="mi"><svg class="i18"><use href="#m7"/></svg></span><i class="ms"></i><span class="mi"><svg class="i18"><use href="#m8"/></svg></span></div>
    </div>
    <div class="gl"><span>标准化...</span><b class="aw"><i class="arr"></i></b></div>
  </div>

  <div class="group g5">
    <div class="gb minis">
      <div class="mr"><span class="mi"><svg class="i18"><use href="#g1"/></svg></span><span class="mi"><svg class="i18"><use href="#g2"/></svg></span></div>
      <div class="mr"><span class="mi"><svg class="i18"><use href="#g7"/></svg></span></div>
    </div>
    <div class="gl"><span>齿...</span><b class="aw"><i class="arr"></i></b></div>
  </div>

  <div class="group g6">
    <div class="gb minis">
      <div class="mr"><span class="mi"><svg class="i18"><use href="#g3"/></svg></span><span class="mi"><svg class="i18"><use href="#g4"/></svg></span></div>
      <div class="mr"><span class="mi"><svg class="i18"><use href="#g5"/></svg></span><i class="ms"></i><span class="mi"><svg class="i18"><use href="#g6"/></svg></span></div>
    </div>
    <div class="gl"><span>弹...</span><b class="aw"><i class="arr"></i></b></div>
  </div>

  <div class="group g7">
    <div class="gb minis">
      <div class="mr"><span class="mi"><svg class="i18"><use href="#j1"/></svg></span><span class="mi"><svg class="i18"><use href="#j2"/></svg></span></div>
      <div class="mr"><span class="mi"><svg class="i18"><use href="#j3"/></svg></span><span class="mi"><svg class="i18"><use href="#j4"/></svg></span></div>
    </div>
    <div class="gl"><span>加...</span><b class="aw"><i class="arr"></i></b></div>
  </div>

  <div class="group g8">
    <div class="gb minis">
      <div class="mr"><span class="mi"><svg class="i18"><use href="#tri"/></svg></span><span class="mi"><svg class="i18"><use href="#tbl"/></svg></span><span class="mi"><svg class="i18"><use href="#ffold"/></svg></span><span class="mi"><svg class="i18"><use href="#gfold"/></svg></span></div>
      <div class="mr"><span class="mi"><svg class="i18"><use href="#note"/></svg></span><span class="mi"><svg class="i18"><use href="#bru2"/></svg></span><i class="ms"></i><span class="mi bino"><svg class="i18"><use href="#bino"/></svg><b>10H7</b></span></div>
    </div>
    <div class="gl"><span>建模工...</span><b class="aw"><i class="arr"></i></b></div>
  </div>

  <div class="group g9">
    <div class="gb minis">
      <div class="mr"><span class="mi"><svg class="i18"><use href="#gold"/></svg></span></div>
      <div class="mr"><span class="mi"><svg class="i18"><use href="#gold"/></svg></span></div>
    </div>
    <div class="gl"><span>.</span><b class="aw"><i class="arr"></i></b></div>
  </div>

  <div class="group g10">
    <div class="gb minis">
      <div class="mr"><span class="mi"><svg class="i18"><use href="#d1"/></svg></span><i class="ms"></i><span class="mi tx">X</span><span class="mi tol">1.00<br>±.05</span><span class="mi tol">1.00<br>±.88</span><span class="mi tol">1.00<br>±.88</span><span class="mi tol">1.00<br>±.89</span><span class="mi"><span class="boxx">X</span></span><span class="mi tx2">(X)</span><span class="mi h7">10H7</span><span class="mi fit">10H7<br>[8.01]</span><span class="mi fit">10H7<br>[8<sup>019</sup>]</span><span class="mi fit">10<br>[8<sup>019</sup>]</span></div>
      <div class="mr"><span class="mi"><svg class="i18"><use href="#d2"/></svg></span><span class="mi"><svg class="i18"><use href="#d3"/></svg></span><i class="ms"></i><span class="mi"><svg class="i18"><use href="#d4"/></svg></span><span class="mi"><svg class="i18"><use href="#d5"/></svg></span><span class="mi"><svg class="i14"><use href="#d6"/></svg></span></div>
    </div>
    <div class="gl"><span>尺寸快速格式化工具 - GC工具箱</span><b class="aw"><i class="arr"></i></b></div>
  </div>

  <div class="group g11">
    <div class="gb"><div class="big w45"><svg class="i32"><use href="#surf"/></svg><span>曲面</span><i class="arr"></i></div></div>
    <div class="gl"></div>
  </div>

  <div class="group g12">
    <div class="gb">
      <div class="big w86 dim"><svg class="i32"><use href="#asmh"/></svg><span>处理装配</span></div>
      <div class="big w40"><svg class="i32"><use href="#add"/></svg><span>添加</span><i class="arr"></i></div>
      <div class="rows w90 asm"><div class="ri"><svg class="i16"><use href="#acons"/></svg>装配约束</div><div class="ri"><svg class="i16"><use href="#amove"/></svg>移动组件</div><div class="ri"><svg class="i16"><use href="#apat"/></svg>阵列组件</div></div>
    </div>
    <div class="gl"><span>装配</span><b class="aw"><i class="arr"></i></b></div>
  </div>

  <div class="group g13">
    <div class="gb"><div class="big w56"><svg class="i32"><use href="#rule"/></svg><span>测量</span></div></div>
    <div class="gl"><span>分...</span><b class="aw"><i class="arr"></i></b></div>
  </div>
  <div class="group g14">
    <div class="gb"></div>
    <div class="gl"><i class="arr"></i></div>
  </div>
</section>

<section class="toolbar">
  <div class="menu-btn"><svg class="i36"><use href="#menu"/></svg><span>菜单(<u>M</u>)</span><i class="arr"></i></div>
  <i class="tsep"></i>
  <div class="combo c1"><span>无选择过滤器</span><i class="arr big-arr"></i></div>
  <div class="combo c2"><span>整个装配</span><i class="arr big-arr"></i></div>
  <div class="tgrid">
    <span class="c"><svg class="i32"><use href="#t1"/></svg></span>
    <span class="c"><svg class="i32"><use href="#t2"/></svg></span>
    <span class="c"><svg class="i30"><use href="#t3"/></svg></span>
    <span class="c"><i class="arr"></i></span>
    <span class="c"><svg class="i32"><use href="#t4"/></svg></span>
    <span class="c"><svg class="i32"><use href="#t5"/></svg></span>
    <span class="c"><svg class="i32"><use href="#t6"/></svg></span>
    <span class="c"><svg class="i30"><use href="#t7"/></svg></span>
    <span class="c"><i class="arr"></i></span>
    <span class="c"><svg class="i32"><use href="#t8"/></svg></span>
    <span class="c"><svg class="i32"><use href="#t9"/></svg></span>
    <span class="c"><span class="hl"><svg class="i36"><use href="#h1"/></svg></span></span>
    <span class="c"><span class="hl"><svg class="i36"><use href="#p-end"/></svg></span></span>
    <span class="c"><span class="hl"><svg class="i36"><use href="#p-mid"/></svg></span></span>
    <span class="c"><svg class="i36"><use href="#p-curve"/></svg></span>
    <span class="c"><span class="hl"><svg class="i36"><use href="#p-poly"/></svg></span></span>
    <span class="c"><span class="hl"><svg class="i36"><use href="#p-spl"/></svg></span></span>
    <span class="c"><svg class="i36"><use href="#p-cross"/></svg></span>
    <span class="c"><span class="hl"><svg class="i36"><use href="#p-cen"/></svg></span></span>
    <span class="c"><svg class="i36"><use href="#p-quad"/></svg></span>
    <span class="c"><span class="hl"><svg class="i36"><use href="#p-x"/></svg></span></span>
    <span class="c"><span class="hl"><svg class="i36"><use href="#p-near"/></svg></span></span>
    <span class="c"><svg class="i36"><use href="#p-surf"/></svg></span>
    <span class="c stack"><svg class="i22"><use href="#p-wire"/></svg><svg class="i22"><use href="#p-grid"/></svg></span>
    <i class="tsep2"></i>
    <span class="c"><svg class="i32"><use href="#v1"/></svg></span>
    <span class="c"><svg class="i32"><use href="#v2"/></svg></span>
    <span class="c"><svg class="i32"><use href="#v3"/></svg></span>
    <span class="c"><svg class="i32"><use href="#v4"/></svg></span>
    <span class="c"><svg class="i32"><use href="#v5"/></svg></span>
    <span class="c"><svg class="i30"><use href="#v6"/></svg></span>
    <span class="c"><i class="arr"></i></span>
    <span class="c"><svg class="i36"><use href="#v7"/></svg></span>
    <span class="c"><i class="arr"></i></span>
    <span class="c stack"><svg class="i24"><use href="#v8"/></svg><svg class="i24"><use href="#v9"/></svg></span>
    <span class="c stack tight"><i class="arr"></i><i class="arr"></i></span>
    <span class="c"><i class="tsep3"></i></span>
    <span class="c end"><i class="arr"></i></span>
  </div>
</section>

<main class="main">
  <aside class="rail">
    <span class="gear">⚙</span>
    <span class="ra"><svg class="i32"><use href="#n1"/></svg></span>
    <span class="ra"><svg class="i32"><use href="#n2"/></svg></span>
    <span class="ra on"><svg class="i32"><use href="#n3"/></svg></span>
    <span class="ra"><svg class="i32"><use href="#n4"/></svg></span>
    <span class="ra"><svg class="i36"><use href="#n5"/></svg></span>
    <span class="ra"><svg class="i32"><use href="#n6"/></svg></span>
    <span class="ra"><svg class="i32"><use href="#n7"/></svg></span>
    <span class="ra"><svg class="i32"><use href="#n8"/></svg></span>
    <span class="ra"><svg class="i32"><use href="#n9"/></svg></span>
  </aside>

  <section class="nav">
    <div class="nav-title"><span>部件导航器</span><i class="maxbox"></i></div>
    <div class="tree">
      <div class="thead"><span class="cn">名称<i class="sorter"></i></span><span class="cs">最新</span></div>
      <div class="tr"><span class="cn"><i class="pm">+</i><svg class="i16 a"><use href="#cube3d"/></svg>模型视图</span><span class="cs"></span></div>
      <div class="tr odd"><span class="cn"><i class="pm">+</i><svg class="ck"><use href="#check"/></svg><svg class="i16 cam"><use href="#cam"/></svg>摄像机</span><span class="cs"></span></div>
      <div class="tr"><span class="cn"><i class="pm">−</i><svg class="i16 a"><use href="#folder"/></svg>模型历史记录</span><span class="cs"></span></div>
      <div class="tr leaf odd mute"><span class="cn"><svg class="cb"><use href="#cbox"/></svg><svg class="li"><use href="#csys"/></svg>基准坐标系 (0)</span><span class="cs"><svg class="ck"><use href="#check"/></svg></span></div>
      <div class="tr leaf"><span class="cn"><svg class="cb"><use href="#cbox"/></svg><svg class="li"><use href="#ext"/></svg>拉伸 (1)</span><span class="cs"><svg class="ck"><use href="#check"/></svg></span></div>
      <div class="tr leaf odd"><span class="cn"><svg class="cb"><use href="#cbox"/></svg><svg class="li"><use href="#edge"/></svg>边倒圆 (2)</span><span class="cs"><svg class="ck"><use href="#check"/></svg></span></div>
      <div class="tr leaf mute"><span class="cn"><svg class="cb"><use href="#cbox"/></svg><b class="ta">A</b>文本 (3)</span><span class="cs"><svg class="ck"><use href="#check"/></svg></span></div>
      <div class="tr leaf odd"><span class="cn"><span class="cbwrap"><svg class="cb"><use href="#cbox"/></svg><svg class="inf"><use href="#info"/></svg></span><svg class="li"><use href="#ext"/></svg>拉伸 (4)</span><span class="cs"><svg class="ck"><use href="#check"/></svg></span></div>
      <div class="tr leaf"><span class="cn"><svg class="cb"><use href="#cbox"/></svg><b class="ta">A</b>文本 (5)</span><span class="cs"><svg class="ck"><use href="#check"/></svg></span></div>
      <div class="tr leaf odd cur"><span class="cn"><svg class="cb"><use href="#cbox"/></svg><svg class="li"><use href="#ext"/></svg>拉伸 (6)</span><span class="cs"><svg class="ck"><use href="#check"/></svg></span></div>
      <div class="tblank"><span class="cn"></span><span class="cs"></span></div>
      <div class="hscroll"><i class="sl"></i><i class="thumb"></i><i class="sr"></i></div>
    </div>
    <div class="splitter"></div>
    <div class="acc a1"><span>相关 性</span><svg class="chev" viewBox="0 0 18 16"><path d="M2 2l7 11 7-11" fill="none" stroke="#136a80" stroke-width="3.500"/></svg></div>
    <div class="acc a2"><span>细节</span><svg class="chev" viewBox="0 0 18 16"><path d="M2 2l7 11 7-11" fill="none" stroke="#136a80" stroke-width="3.500"/></svg></div>
    <div class="acc a3"><span>预览</span><svg class="chev" viewBox="0 0 18 16"><path d="M2 14 9 3l7 11" fill="none" stroke="#136a80" stroke-width="3.500"/></svg></div>
    <div class="previewwrap">
      <div class="preview">没有可用的预览</div>
    </div>
    <div class="hscroll2"><i class="sl"></i><i class="thumb"></i><i class="sr"></i></div>
  </section>

  <section class="view">
    <div class="doctabs"><span class="doctab"><svg class="i14"><use href="#edge"/></svg><span>爱心手机支架ipad支架张哲瀚.prt</span><b>×</b></span></div>
    <div class="canvas">
      <svg class="model" viewBox="0 0 1568 1440" preserveAspectRatio="none">
        <defs>
          <linearGradient id="mLeft" x1="0" y1="0" x2="1" y2="0"><stop offset="0" stop-color="#f0b010"/><stop offset=".6" stop-color="#e0a000"/><stop offset="1" stop-color="#cc9000"/></linearGradient>
          <linearGradient id="mRight" x1="0" y1="0" x2="1" y2="0"><stop offset="0" stop-color="#9a6400"/><stop offset=".5" stop-color="#d89a00"/><stop offset="1" stop-color="#ebb010"/></linearGradient>
          <linearGradient id="mFront" gradientUnits="userSpaceOnUse" x1="135" y1="0" x2="1460" y2="0"><stop offset="0" stop-color="#cc9000"/><stop offset=".02" stop-color="#a06800"/><stop offset=".05" stop-color="#6e4200"/><stop offset=".96" stop-color="#6a3e00"/><stop offset="1" stop-color="#9a6400"/></linearGradient>
          <linearGradient id="mFillet" gradientUnits="userSpaceOnUse" x1="770" y1="835" x2="785" y2="875"><stop offset="0" stop-color="#ffc414"/><stop offset=".5" stop-color="#e89e08"/><stop offset="1" stop-color="#8a5400"/></linearGradient>
          <linearGradient id="mWall" x1="0" y1="0" x2="1" y2="0"><stop offset="0" stop-color="#f0b010"/><stop offset=".12" stop-color="#a86c00"/><stop offset=".33" stop-color="#8a5600"/><stop offset=".42" stop-color="#cc9000"/><stop offset=".5" stop-color="#7a4a00"/><stop offset=".6" stop-color="#d09400"/><stop offset=".85" stop-color="#945c00"/><stop offset="1" stop-color="#e8a808"/></linearGradient>
          <clipPath id="holeClip"><path d="M665 578C600 525 498 440 498 345 500 265 560 215 600 235 625 200 665 180 695 190 740 210 762 290 750 350 738 425 690 510 672 578Z"/></clipPath>
        </defs>
        <path d="M35 1060 75 1310C85 1360 120 1380 165 1368L138 1140C90 1150 40 1120 35 1060Z" fill="url(#mLeft)"/>
        <path d="M1425 565C1470 550 1490 520 1490 470L1520 650C1525 710 1510 780 1460 800Z" fill="url(#mRight)"/>
        <path d="M138 1160 1428 595 1462 800 165 1368Z" fill="url(#mFront)"/>
        <path d="M135 1135 1425 565 1430 597 138 1162Z" fill="url(#mFillet)"/>
        <path d="M580 45C610 48 630 68 650 90L1155 590C1190 625 1240 620 1300 590 1335 570 1340 500 1330 445 1340 400 1375 355 1420 355 1465 360 1490 400 1490 470 1490 520 1470 550 1425 570L135 1135C90 1145 40 1120 35 1060 30 990 70 920 120 925 150 925 175 945 178 965 175 1000 190 1040 225 1055 280 1060 350 980 370 900L500 130C510 90 540 40 580 45Z" fill="#f2ac08"/>
        <path class="eg" d="M625 75 1158 605C1190 640 1235 635 1300 600 1330 585 1345 530 1340 490L1332 445C1345 400 1385 365 1420 372 1460 385 1478 430 1470 480 1465 520 1450 550 1425 565L135 1130C100 1140 60 1110 50 1060 45 1000 80 935 125 935 145 935 160 945 165 960L170 1000C185 1040 215 1065 245 1070 290 1060 345 990 362 900L505 135C520 90 545 60 585 62 600 60 612 65 625 75Z" fill="#ffc414"/>
        <path class="eg" d="M662 592C590 540 482 450 482 340 485 250 555 195 600 218 625 180 665 160 695 172 750 195 780 290 765 350 750 430 690 520 678 585 675 600 665 600 662 592Z" fill="#f4b00c"/>
        <path d="M665 578C600 525 498 440 498 345 500 265 560 215 600 235 625 200 665 180 695 190 740 210 762 290 750 350 738 425 690 510 672 578Z" fill="url(#mWall)"/>
        <g clip-path="url(#holeClip)"><path d="M540 500C565 455 600 440 628 455 650 440 680 410 745 400L700 620 640 620Z" fill="#c9cacc"/></g>
        <path class="eg nf" d="M590 218 610 340 620 450M135 1130 165 1368M1425 565 1460 800M625 75 630 62M505 135 498 138M362 900 372 902M165 960 176 964M170 1000 180 1000M1332 445 1342 441M1340 490 1349 487"/>
      </svg>
      <span class="engrave">张哲瀚</span>
      <svg class="triad" viewBox="0 0 70 76">
        <path d="M22 24 46 17l8 26-24 10z" fill="#c9c9cb" stroke="#b0b0b2"/><path d="M25 33 49 26" stroke="#aaa"/>
        <path d="M24 46 13 12" stroke="#1c4fd0" stroke-width="2.400"/><path d="M10 13l3-9 4 8z" fill="#1c4fd0"/>
        <path d="M24 46 58 36" stroke="#c83030" stroke-width="2.400"/><path d="M55 32l10 3-8 5z" fill="#c83030"/>
        <path d="M24 48 29 62" stroke="#2a7a30" stroke-width="2.400"/>
        <circle cx="24" cy="47" r="4.500" fill="#f4f4f4" stroke="#bbb"/>
        <text x="8" y="8" class="ax az">Z</text><text x="62" y="40" class="ax ar">X</text><text x="27" y="72" class="ax ag">Y</text>
      </svg>
    </div>
  </section>
</main>

<div class="wm">
  <div class="wmi"><b>3D</b><span>打印资源社<em>www.3dzyk.cn</em></span></div><div class="wmi"><b>3D</b><span>打印资源社<em>www.3dzyk.cn</em></span></div><div class="wmi"><b>3D</b><span>打印资源社<em>www.3dzyk.cn</em></span></div><div class="wmi"><b>3D</b><span>打印资源社<em>www.3dzyk.cn</em></span></div><div class="wmi"><b>3D</b><span>打印资源社<em>www.3dzyk.cn</em></span></div><div class="wmi"><b>3D</b><span>打印资源社<em>www.3dzyk.cn</em></span></div><div class="wmi"><b>3D</b><span>打印资源社<em>www.3dzyk.cn</em></span></div><div class="wmi"><b>3D</b><span>打印资源社<em>www.3dzyk.cn</em></span></div><div class="wmi"><b>3D</b><span>打印资源社<em>www.3dzyk.cn</em></span></div>
  <div class="wmi"><b>3D</b><span>打印资源社<em>www.3dzyk.cn</em></span></div><div class="wmi"><b>3D</b><span>打印资源社<em>www.3dzyk.cn</em></span></div><div class="wmi"><b>3D</b><span>打印资源社<em>www.3dzyk.cn</em></span></div><div class="wmi"><b>3D</b><span>打印资源社<em>www.3dzyk.cn</em></span></div><div class="wmi"><b>3D</b><span>打印资源社<em>www.3dzyk.cn</em></span></div><div class="wmi"><b>3D</b><span>打印资源社<em>www.3dzyk.cn</em></span></div><div class="wmi"><b>3D</b><span>打印资源社<em>www.3dzyk.cn</em></span></div><div class="wmi"><b>3D</b><span>打印资源社<em>www.3dzyk.cn</em></span></div><div class="wmi"><b>3D</b><span>打印资源社<em>www.3dzyk.cn</em></span></div>
  <div class="wmi"><b>3D</b><span>打印资源社<em>www.3dzyk.cn</em></span></div><div class="wmi"><b>3D</b><span>打印资源社<em>www.3dzyk.cn</em></span></div><div class="wmi"><b>3D</b><span>打印资源社<em>www.3dzyk.cn</em></span></div><div class="wmi"><b>3D</b><span>打印资源社<em>www.3dzyk.cn</em></span></div><div class="wmi"><b>3D</b><span>打印资源社<em>www.3dzyk.cn</em></span></div><div class="wmi"><b>3D</b><span>打印资源社<em>www.3dzyk.cn</em></span></div><div class="wmi"><b>3D</b><span>打印资源社<em>www.3dzyk.cn</em></span></div><div class="wmi"><b>3D</b><span>打印资源社<em>www.3dzyk.cn</em></span></div><div class="wmi"><b>3D</b><span>打印资源社<em>www.3dzyk.cn</em></span></div>
  <div class="wmi"><b>3D</b><span>打印资源社<em>www.3dzyk.cn</em></span></div><div class="wmi"><b>3D</b><span>打印资源社<em>www.3dzyk.cn</em></span></div><div class="wmi"><b>3D</b><span>打印资源社<em>www.3dzyk.cn</em></span></div><div class="wmi"><b>3D</b><span>打印资源社<em>www.3dzyk.cn</em></span></div><div class="wmi"><b>3D</b><span>打印资源社<em>www.3dzyk.cn</em></span></div><div class="wmi"><b>3D</b><span>打印资源社<em>www.3dzyk.cn</em></span></div><div class="wmi"><b>3D</b><span>打印资源社<em>www.3dzyk.cn</em></span></div><div class="wmi"><b>3D</b><span>打印资源社<em>www.3dzyk.cn</em></span></div><div class="wmi"><b>3D</b><span>打印资源社<em>www.3dzyk.cn</em></span></div>
  <div class="wmi"><b>3D</b><span>打印资源社<em>www.3dzyk.cn</em></span></div><div class="wmi"><b>3D</b><span>打印资源社<em>www.3dzyk.cn</em></span></div><div class="wmi"><b>3D</b><span>打印资源社<em>www.3dzyk.cn</em></span></div><div class="wmi"><b>3D</b><span>打印资源社<em>www.3dzyk.cn</em></span></div><div class="wmi"><b>3D</b><span>打印资源社<em>www.3dzyk.cn</em></span></div><div class="wmi"><b>3D</b><span>打印资源社<em>www.3dzyk.cn</em></span></div><div class="wmi"><b>3D</b><span>打印资源社<em>www.3dzyk.cn</em></span></div><div class="wmi"><b>3D</b><span>打印资源社<em>www.3dzyk.cn</em></span></div><div class="wmi"><b>3D</b><span>打印资源社<em>www.3dzyk.cn</em></span></div>
  <div class="wmi"><b>3D</b><span>打印资源社<em>www.3dzyk.cn</em></span></div><div class="wmi"><b>3D</b><span>打印资源社<em>www.3dzyk.cn</em></span></div><div class="wmi"><b>3D</b><span>打印资源社<em>www.3dzyk.cn</em></span></div><div class="wmi"><b>3D</b><span>打印资源社<em>www.3dzyk.cn</em></span></div><div class="wmi"><b>3D</b><span>打印资源社<em>www.3dzyk.cn</em></span></div><div class="wmi"><b>3D</b><span>打印资源社<em>www.3dzyk.cn</em></span></div><div class="wmi"><b>3D</b><span>打印资源社<em>www.3dzyk.cn</em></span></div><div class="wmi"><b>3D</b><span>打印资源社<em>www.3dzyk.cn</em></span></div><div class="wmi"><b>3D</b><span>打印资源社<em>www.3dzyk.cn</em></span></div>
</div>
</body>
</html>
```

FILE: styles.css
```css
* { box-sizing: border-box; }
html, body { margin: 0; height: 975px; width: 1913px; overflow: hidden; background: #fff; }
body { position: relative; font-family: "Liberation Sans", "Noto Sans CJK SC", sans-serif; color: #222; font-size: 17px; }
i, b, em { font-style: normal; }
.sprite { position: absolute; width: 0; height: 0; }

svg { display: block; flex: none; }
.i14 { width: 14px; height: 14px; }
.i16 { width: 16px; height: 16px; }
.i18 { width: 18px; height: 18px; }
.i20 { width: 20px; height: 20px; }
.i22 { width: 22px; height: 22px; }
.i24 { width: 24px; height: 24px; }
.i30 { width: 30px; height: 30px; }
.i32 { width: 32px; height: 32px; }
.i36 { width: 36px; height: 36px; }
.c { display: flex; align-items: center; justify-content: center; min-width: 0; }

.arr { display: block; flex: none; width: 0; height: 0; border-left: 4.5px solid transparent; border-right: 4.5px solid transparent; border-top: 5px solid #222; }
.arr.gray { border-top-color: #aaa; }
.arr.ml { margin-left: 9px; }
.arr.up { border-top: 0; border-bottom: 5px solid #999; }
.big-arr { border-left-width: 6px; border-right-width: 6px; border-top-width: 7px; }
.menu-arr { display: block; width: 10px; height: 8px; border-top: 2px solid #222; position: relative; }
.menu-arr::after { content: ""; position: absolute; left: 0; top: 2px; border-left: 5px solid transparent; border-right: 5px solid transparent; border-top: 5px solid #222; }

/* title bar */
.titlebar { height: 34px; display: grid; align-items: stretch; background: #fff;
  grid-template-columns: 50px 1px 30px 1px 26px 16px 26px 1px 27px 22px 24px 24px 1px 28px 18px 1px 27px 1px 27px 66px 29px 32px 17px 16px 554px 101px 1fr auto 18px 36px 36px 29px; }
.vsep { background: #d8d8d8; margin: 4px 0 3px; }
.nx { font: 700 29px/34px "Liberation Sans", sans-serif; color: #7d98aa; padding-left: 4px; letter-spacing: -.5px; }
.qt { font-size: 16.500px; line-height: 34px; white-space: nowrap; }
.apptitle { font-size: 18px; line-height: 34px; white-space: nowrap; }
.siemens { font: 700 17px/38px "Liberation Sans", sans-serif; color: #0f8a96; grid-column: 28; letter-spacing: .2px; }
.winctl { display: flex; align-items: center; justify-content: center; }
.titlebar > :nth-last-child(3) { grid-column: 30; }
.wmin { display: block; width: 9px; height: 2px; background: #444; margin-top: 8px; }
.wres { display: block; width: 11px; height: 11px; border: 1.500px solid #444; box-shadow: 2px -2px 0 -.5px #fff, 3px -3px 0 -.5px #444; }
.wclose { font-size: 14px; color: #333; padding-left: 4px; }

/* ribbon tabs */
.tabs { height: 38px; background: #d9d9d9; display: flex; align-items: stretch; }
.filetab { width: 104px; background: #4f9db8; color: #eef6f9; font-size: 20px; line-height: 40px; text-align: center; margin-right: 2px; }
.tab { width: 68.700px; font-size: 20px; line-height: 41px; text-align: center; color: #333; white-space: nowrap; }
.tab.wide { width: 110px; }
.tab.active { background: #fff; color: #1d7388; margin-top: 1px; line-height: 40px; }
.tabs-right { margin-left: auto; display: flex; align-items: center; padding-right: 5px; }
.search { width: 177px; height: 27px; margin-right: 12px; background: #fff; border: 1px solid #bfbfbf; display: flex; align-items: center; justify-content: space-between; padding: 0 4px; color: #aaa; font-size: 16.500px; }
.fullscr { width: 32px; height: 31px; margin-right: 15px; display: flex; align-items: center; justify-content: center;
  background:
    linear-gradient(#8c8c8c, #8c8c8c) left top / 8px 2px,
    linear-gradient(#8c8c8c, #8c8c8c) left top / 2px 8px,
    linear-gradient(#8c8c8c, #8c8c8c) right top / 8px 2px,
    linear-gradient(#8c8c8c, #8c8c8c) right top / 2px 8px,
    linear-gradient(#8c8c8c, #8c8c8c) left bottom / 8px 2px,
    linear-gradient(#8c8c8c, #8c8c8c) left bottom / 2px 8px,
    linear-gradient(#8c8c8c, #8c8c8c) right bottom / 8px 2px,
    linear-gradient(#8c8c8c, #8c8c8c) right bottom / 2px 8px;
  background-repeat: no-repeat; }
.fullscr i { width: 20px; height: 23px; border: 2px solid #fff; background: linear-gradient(#dce8fa, #2f6fd8); outline: 1px solid #334; }
.chev-up { width: 24px; height: 16px; margin-right: 17px; }
.help { width: 25px; height: 30px; border-radius: 50%; background: #2e6ad8; color: #fff; text-align: center; font: 700 24px/30px "Liberation Sans", sans-serif; }

/* ribbon */
.ribbon { height: 116px; padding-top: 2px; display: flex; background: #fff; border-bottom: 1px solid #d2d2d2; }
.group { height: 110px; display: flex; flex-direction: column; border-right: 1px solid #dcdcdc; flex: none; }
.g1 { width: 176px; } .g2 { width: 456px; } .g3 { width: 217px; } .g4 { width: 103px; } .g5 { width: 52px; } .g6 { width: 58px; } .g7 { width: 53px; } .g8 { width: 98px; } .g9 { width: 29px; } .g10 { width: 287px; } .g11 { width: 45px; } .g12 { width: 232px; } .g13 { width: 56px; } .g14 { flex: 1; border: 0; }
.gb { height: 90px; display: flex; flex: none; }
.gl { height: 20px; flex: none; display: flex; align-items: center; color: #1a6a80; font-size: 17px; line-height: 20px; white-space: nowrap; margin-top: 3px; }
.gl > span { flex: 1; text-align: center; }
.aw { width: 25px; flex: none; display: flex; justify-content: center; padding-left: 1px; }
.g14 .gl { justify-content: flex-end; padding-right: 1px; }
.big { display: flex; flex-direction: column; align-items: center; padding-top: 4px; flex: none; font-size: 17px; white-space: nowrap; }
.big > span { line-height: 24px; margin-top: 4px; }
.big > .arr { margin-top: 4px; }
.w38 { width: 38px; } .w40 { width: 40px; } .w42 { width: 42px; } .w45 { width: 44px; } .w52 { width: 53px; margin-left: 12px; } .w56 { width: 55px; padding-left: 3px; } .w60 { width: 60px; } .w64 { width: 64px; } .w86 { width: 80px; margin-left: 6px; } .w83 { width: 81px; margin-left: 3px; } .w90 { width: 90px; margin-left: 9px; } .w100 { width: 100px; margin-left: 8px; }
.selected { width: 75px; margin-left: 9px; height: 90px; background: linear-gradient(#b0d5e0 0, #b0d5e0 37px, #fff 37px, #fff 38px, #b0d5e0 38px); }
.dim span { color: #bbb; }
.gallery { width: 85px; height: 87px; margin-top: 3px; border: 1px solid #ddd; display: grid; grid-template-columns: 1fr 1fr; padding: 3px 2px; }
.gi { width: 36px; height: 36px; margin: auto; }
.scrollcol { width: 25px; display: flex; flex-direction: column; align-items: center; gap: 24px; padding-top: 15px; }
.arrm { position: relative; }
.arrm::before { content: ""; position: absolute; left: -4.500px; top: -9px; width: 9px; height: 2px; background: #222; }
.rows { display: flex; flex-direction: column; flex: none; margin-top: -1px; }
.ri { height: 28.500px; display: flex; align-items: center; gap: 5px; font-size: 17px; white-space: nowrap; }
.rows.asm { margin-left: 8px; width: 90px; }
.more { width: 37px; margin-left: 3px; flex: none; display: flex; flex-direction: column; align-items: center; padding-top: 2px; white-space: nowrap; font-size: 17px; }
.morebox { width: 37px; height: 34px; border: 1px solid #ddd; border-radius: 4px; display: flex; align-items: center; justify-content: center; }
.more > span:nth-child(2) { line-height: 24px; margin-top: 4px; }
.more > .arr { margin-top: 4px; }
.g3 .more { margin-left: 0; }

.minis { flex-direction: column; padding-top: 5px; }
.mr { height: 32px; display: flex; align-items: center; }
.mi { width: 23.300px; display: flex; flex: none; align-items: center; justify-content: center; height: 28px; overflow: visible; }
.ms { width: 1px; height: 26px; background: #d8d8d8; margin: 0 3px 0 3px; flex: none; }
.g4 .minis { padding-left: 3px; }
.g5 .minis { padding-left: 4px; }
.g6 .minis { padding-left: 4px; }
.g7 .minis { padding-left: 3px; }
.g8 .minis { padding-left: 5px; }
.g9 .minis { padding-left: 1px; }
.g10 .minis { padding-left: 4px; }
.tx { font-size: 15px; color: #333; }
.tx2 { font-size: 15px; color: #6a2c3a; white-space: nowrap; }
.tol { display: block; font-size: 8px; line-height: 9px; color: #8a3a50; text-align: center; padding-top: 5px; white-space: nowrap; font-weight: 700; }
.boxx { width: 16px; height: 16px; border: 1.500px solid #8a2a3a; font-size: 13px; line-height: 13px; text-align: center; color: #333; }
.h7 { font-size: 8px; color: #3a3ab0; font-weight: 700; white-space: nowrap; }
.fit { display: block; font-size: 7.500px; line-height: 8.500px; color: #3a3ab0; text-align: center; padding-top: 5px; white-space: nowrap; font-weight: 700; }
.fit sup { font-size: 5px; line-height: 0; }
.bino { flex-direction: column; }
.bino b { font-size: 8px; line-height: 8px; color: #444; margin-top: -8px; }

/* toolbar */
.toolbar { height: 65px; display: flex; align-items: center; background: #fff; border-bottom: 2px solid #a8a8a8; padding-top: 2px; }
.menu-btn { width: 124px; flex: none; display: flex; align-items: center; padding-left: 9px; font-size: 17px; white-space: nowrap; }
.menu-btn span { margin-left: 1px; }
.menu-btn .arr { margin-left: 3px; }
.tsep { width: 1px; height: 56px; background: #d8d8d8; flex: none; }
.combo { height: 26px; border: 1px solid #aaa; flex: none; display: flex; align-items: center; justify-content: space-between; padding: 0 6px; font-size: 16.500px; white-space: nowrap; }
.c1 { width: 192px; margin-left: 11px; }
.c2 { width: 201px; margin-left: 10px; }
.tgrid { display: grid; height: 56px; margin-left: 8px; width: 1366px; flex: none;
  grid-template-columns: 32px 42px 44px 6px 54px 28px 52px 30px 26px 36px 45px 39px 40px 44px 40px 41px 39px 44px 37px 47px 33px 52px 26px 48px 1px 53px 28px 52px 32px 50px 34px 22px 38px 16px 38px 10px 22px 45px; }
.hl { width: 38px; height: 38px; background: #c9e4ea; border: 1px solid #a9d2dc; display: flex; align-items: center; justify-content: center; flex: none; }
.stack { flex-direction: column; gap: 9px; }
.stack.tight { gap: 24px; }
.tsep2 { background: #d8d8d8; }
.tsep3 { display: block; width: 1px; height: 56px; background: #d8d8d8; }
.end { justify-content: flex-end; align-items: flex-end; padding-bottom: 6px; }

/* main */
.main { display: flex; height: 722px; }
.rail { width: 40px; flex: none; background: #dcdcdc; border-right: 1px solid #9d9d9d; display: flex; flex-direction: column; align-items: stretch; position: relative; }
.gear { font-size: 19px; line-height: 30px; color: #333; height: 44px; text-align: center; font-family: "DejaVu Sans", sans-serif; }
.ra { height: 46px; display: flex; align-items: center; justify-content: center; flex: none; padding-left: 5px; }
.ra:nth-child(3) { margin-top: 4px; }
.ra:nth-child(5) { margin-top: 1px; }
.ra:nth-child(6) { margin-top: 14px; }
.ra:nth-child(7) { margin-top: 19px; }
.ra:nth-child(8) { margin-top: 15px; }
.ra:nth-child(9) { margin-top: 5px; }
.ra:nth-child(10) { margin-top: 0; }
.ra.on { margin: 1px -1px 0 2px; padding-left: 0; background: #fff; height: 52px; border: 1px solid #c8c8c8; border-right: 0; position: relative; z-index: 1; }

.nav { width: 285px; flex: none; background: #fff; border-right: 1px solid #9d9d9d; padding-left: 7px; display: flex; flex-direction: column; overflow: hidden; }
.nav-title { height: 34px; display: flex; align-items: center; justify-content: space-between; padding: 0 17px 0 3px; font-size: 18px; flex: none; }
.maxbox { width: 16px; height: 13px; border: 1.500px solid #222; border-top-width: 3px; margin-top: 3px; }
.tree { width: 267px; border: 1px solid #ddd; border-bottom: 0; background: #fff; position: relative; height: 354px; flex: none; }
.tree::before { content: ""; position: absolute; left: 9px; top: 44px; height: 60px; border-left: 1px dotted #999; }
.tree::after { content: ""; position: absolute; left: 28px; top: 114px; height: 182px; border-left: 1px dotted #999; }
.thead { height: 30px; display: flex; background: #f0f0f0; border-bottom: 1px solid #ddd; font-size: 18px; }
.thead .cn, .thead .cs { padding-top: 1px; }
.cn { width: 200px; display: flex; align-items: center; white-space: nowrap; padding-left: 6px; flex: none; position: relative; z-index: 1; }
.tr .cn { padding-bottom: 2px; }
.cs { flex: 1; border-left: 1px solid #e2e2e2; display: flex; align-items: center; padding-left: 6px; }
.sorter { width: 0; height: 0; border-left: 7px solid transparent; border-right: 7px solid transparent; border-bottom: 7px solid #222; margin-left: 20px; }
.tr { height: 28px; display: flex; font-size: 18px; border-bottom: 1px solid #eee; }
.tr.odd { background: #f8f8f8; }
.pm { width: 12px; height: 12px; background: #fff; border: 1px solid #ccc; font-size: 13px; line-height: 10px; text-align: center; color: #111; margin-left: -2px; margin-right: 4px; flex: none; }
.tr .a { margin-right: 3px; }
.ck { width: 14px; height: 14px; }
.cn > .ck { margin: 0 2px 0 1px; }
.cam { margin-right: 5px; }
.leaf .cn { padding-left: 40px; }
.leaf .cn::before { content: ""; position: absolute; left: 28px; top: 13px; width: 11px; border-top: 1px dotted #999; }
.cb { width: 13px; height: 13px; margin-right: 3px; }
.li { width: 15px; height: 15px; margin-right: 3px; }
.ta { font: 700 17px/18px "Liberation Serif", serif; width: 15px; margin-right: 3px; color: #111; }
.mute { color: #aaa; }
.cur { font-weight: 700; }
.cbwrap { position: relative; }
.inf { position: absolute; left: -3px; top: -7px; width: 12px; height: 12px; }
.tblank { height: 18px; display: flex; }
.hscroll { height: 25px; background: #f0f0f0; display: flex; align-items: stretch; border-bottom: 1px solid #ddd; position: relative; }
.hscroll .thumb { width: 141px; background: #c8c8c8; margin-left: 27px; }
.sl, .sr { position: absolute; top: 8px; width: 9px; height: 9px; border: solid #444; border-width: 0 0 2px 2px; transform: rotate(45deg); left: 11px; }
.sr { left: auto; right: 11px; transform: rotate(225deg); }
.splitter { height: 5px; width: 267px; background: #c8c8c8; border: 1px solid #aaa; margin-top: 3px; flex: none; }
.acc { width: 268px; height: 32px; display: flex; justify-content: space-between; align-items: center; padding-left: 8px; color: #1a6a80; font-size: 20px; border-bottom: 3px solid #d4d4d4; flex: none; }
.chev { width: 18px; height: 16px; margin-right: -1px; }
.a1 { padding-top: 1px; }
.a1 .chev { margin-top: -2px; }
.a3 { border: 0; height: 34px; padding-bottom: 6px; }
.previewwrap { width: 268px; flex: 1; border-left: 1px solid #ddd; padding: 0 7px 0 13px; }
.preview { width: 247px; height: 185px; border: 1px solid #dcdcdc; display: flex; align-items: center; justify-content: center; padding-bottom: 4px; font-size: 18.300px; white-space: nowrap; margin-top: 1px; }
.hscroll2 { width: 268px; height: 15px; background: #f0f0f0; border-top: 1px solid #ddd; position: relative; flex: none; }
.hscroll2 .thumb { display: block; width: 210px; height: 100%; background: #c8c8c8; margin-left: 25px; }

.view { flex: 1; display: flex; flex-direction: column; min-width: 0; }
.doctabs { height: 31px; background: #fff; border-bottom: 2px solid #4f9db8; flex: none; }
.doctab { width: 310px; height: 31px; background: #4f9db8; color: #f0f7fa; display: flex; align-items: center; font-size: 18px; white-space: nowrap; padding: 0 0 2px 7px; }
.doctab svg { margin-right: 6px; }
.doctab b { margin-left: 6px; font-weight: 400; }
.canvas { flex: 1; position: relative; overflow: hidden; background: linear-gradient(176deg, #b1b3b6 0, #c4c5c7 22%, #d8d9db 50%, #e3e4e6 75%, #e8e9eb 100%); }
.model { position: absolute; left: 265px; top: 56px; width: 820px; height: 480px; }
.eg { stroke: #3a3008; stroke-width: 1; vector-effect: non-scaling-stroke; }
.nf { fill: none; }
.engrave { position: absolute; left: 0; top: 0; font: 700 80px/80px "Noto Sans CJK SC", sans-serif; color: #ffc414; white-space: nowrap;
  transform-origin: 0 0; transform: matrix(1.12, -.37, .29, 1.03, 495, 302);
  -webkit-text-stroke: 1px #3e2a04; text-shadow: 1px 2px 0 #7a4c00, 2px 3px 0 #7a4c00, 3px 4px 0 #7a4c00, 4px 5px 0 #6a4000, 5px 6px 0 #6a4000; }
.triad { position: absolute; left: 36px; top: 596px; width: 70px; height: 76px; }
.ax { font: 13px "Liberation Sans", sans-serif; }
.az { fill: #1c4fd0; } .ar { fill: #c83030; } .ag { fill: #2a7a30; }

/* watermark layer over the whole window */
.wm { position: absolute; left: 53px; top: 35px; display: grid; grid-template-columns: repeat(9, 209px); grid-auto-rows: 160px; pointer-events: none; }
.wmi { width: 150px; height: 96px; display: flex; align-items: center; gap: 2px; transform: rotate(-27deg); white-space: nowrap; color: rgba(255,255,255,.2); -webkit-text-stroke: .6px rgba(110,110,110,.07); }
.wmi b { font: 700 46px/46px "Liberation Sans", sans-serif; }
.wmi span { display: flex; flex-direction: column; font: 700 16px/18px "Noto Sans CJK SC", sans-serif; }
.wmi em { font: 10px/11px "Liberation Sans", sans-serif; }
```
